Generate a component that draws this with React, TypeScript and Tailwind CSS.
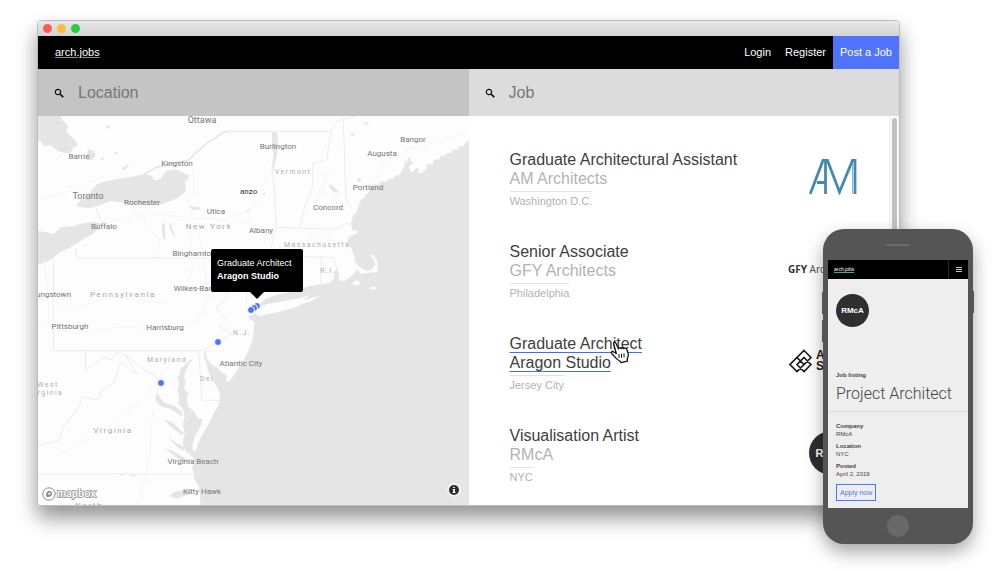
import React from "react";

type Job = { title: string; company: string; place: string; logo: React.ReactNode; active?: boolean };
type Label = { text: string; x: number; y: number };

const cities: Label[] = [
  { text: "Burlington", x: 240, y: 31 },
  { text: "Bangor", x: 375, y: 24 },
  { text: "Augusta", x: 344, y: 38 },
  { text: "Barrie", x: 41, y: 41 },
  { text: "Kingston", x: 139, y: 48 },
  { text: "Portland", x: 330, y: 72 },
  { text: "Concord", x: 290, y: 92 },
  { text: "Rochester", x: 104, y: 87 },
  { text: "Utica", x: 178, y: 96 },
  { text: "Buffalo", x: 66, y: 111 },
  { text: "Albany", x: 223, y: 115 },
  { text: "Binghamton", x: 156, y: 138 },
  { text: "Wilkes-Barre", x: 158, y: 173 },
  { text: "Youngstown", x: 11, y: 179 },
  { text: "Pittsburgh", x: 32, y: 211 },
  { text: "Harrisburg", x: 127, y: 212 },
  { text: "Atlantic City", x: 203, y: 248 },
  { text: "Virginia Beach", x: 155, y: 346 },
  { text: "Kitty Hawk", x: 164, y: 376 },
];

const majorCities: Label[] = [
  { text: "Ottawa", x: 164, y: 4 },
  { text: "Toronto", x: 50, y: 80 },
];

const smallStates: Label[] = [
  { text: "Vermont", x: 255, y: 56 },
  { text: "Massachusetts", x: 279, y: 129 },
  { text: "R.I.", x: 290, y: 155 },
  { text: "N.J.", x: 204, y: 217 },
  { text: "Maryland", x: 129, y: 244 },
  { text: "Del", x: 169, y: 263 },
  { text: "West", x: 10, y: 269 },
  { text: "Virginia", x: 8, y: 277 },
];

const states: Label[] = [
  { text: "New York", x: 171, y: 111 },
  { text: "Pennsylvania", x: 85, y: 179 },
  { text: "Virginia", x: 75, y: 315 },
  { text: "North", x: 51, y: 390 },
];

const pins = [
  { name: "New York", x: 219, y: 190 },
  { name: "Brooklyn", x: 216, y: 192 },
  { name: "Jersey City", x: 213, y: 194 },
  { name: "Philadelphia", x: 180, y: 226 },
  { name: "Washington D.C.", x: 123, y: 267 },
];

function Labels({ items, look }: { items: Label[]; look: string }) {
  return (
    <>
      {items.map((l) => (
        <span
          key={l.text}
          className={"absolute -translate-x-1/2 -translate-y-1/2 whitespace-nowrap " + look}
          style={{ left: l.x, top: l.y }}
        >
          {l.text}
        </span>
      ))}
    </>
  );
}

function Land() {
  return (
    <svg viewBox="6 18 1293 1170" className="absolute top-0 left-0 h-[390px] w-[431px]" aria-hidden="true">
      <rect x="0" y="0" width="1310" height="1200" fill="#fdfdfd" />
      <g fill="#e5e5e5">
        <path d="M1310 84 L1297 92 1288 98 1280 110 1272 108 1262 120 1250 118 1246 128 1232 130 1226 138 1216 136 1208 148 1194 150 1188 166 1176 160 1170 178 1158 190 1146 188 1150 172 1138 178 1126 188 1118 170 1132 160 1122 150 1126 136 1116 146 1112 160 1108 150 1104 170 1096 188 1086 196 1076 198 1070 208 1058 206 1050 216 1036 214 1028 224 1014 222 1006 234 998 246 990 254 984 264 974 270 970 284 964 296 960 308 952 316 948 328 945 342 950 362 962 362 966 368 950 376 938 382 934 396 930 408 944 412 950 426 956 440 956 454 966 466 978 476 994 482 1010 476 1018 464 1012 446 1000 436 1012 436 1022 450 1026 466 1024 486 1000 488 976 492 962 478 952 494 940 502 926 514 910 510 908 488 902 478 896 484 894 504 886 516 860 522 820 528 790 538 752 548 718 556 690 566 672 580 664 600 654 612 636 618 640 628 652 632 656 640 652 670 648 696 640 716 628 740 612 768 598 790 586 806 576 816 568 812 574 798 560 788 544 774 528 764 514 748 508 732 514 718 504 726 504 742 512 762 516 784 528 806 538 824 548 840 552 862 548 884 534 908 524 930 514 948 500 972 488 996 478 1024 470 1022 470 1000 480 972 494 948 500 928 484 924 474 904 458 892 452 870 456 850 444 834 450 814 444 800 450 780 460 760 474 746 462 750 448 764 434 776 432 790 422 806 430 816 424 838 430 864 426 880 440 894 446 920 440 942 446 970 440 1000 448 1022 462 1034 472 1044 474 1058 468 1072 474 1090 474 1106 482 1118 490 1134 492 1160 494 1200 1310 1200Z" />
        <path d="M0 18H74L82 34 96 48 90 64 106 80 120 94 126 106 112 112 104 128 88 130 66 124 42 104 24 108 12 92 0 98Z" />
        <path d="M120 286 134 270 158 252 184 222 210 214 250 206 290 200 326 192 348 198 354 210 372 208 392 182 418 178 444 190 450 204 446 220 450 240 444 250 428 262 402 274 370 286 322 284 276 282 226 272 190 286 160 295 130 290Z" />
        <path d="M0 362 28 366 54 372 74 352 112 348 142 340 176 336 196 342 178 366 142 388 106 410 70 428 42 450 14 462 0 466Z" />
        <path d="M156 118 174 124 178 138 168 150 152 150Z M456 288 490 292 494 298 470 300Z M378 340 386 340 388 392 380 382Z M402 334 408 354 420 382 412 376 400 352Z M708 66 724 66 726 110 720 150 712 180 706 176 714 142 708 112Z M878 220 892 230 908 244 900 250 884 238Z M960 206 976 206 972 220Z M444 190 458 196 454 212 446 206Z M630 300 642 294 636 310Z M942 72 958 68 950 80Z M208 50 226 44 216 56Z M256 176 280 160 268 180Z M192 148 204 140 200 152Z M236 124 250 132 236 134Z M980 34 1000 40 990 46Z M682 250 688 246 684 264Z M250 1090 264 1094 254 1098Z M282 1092 302 1098 290 1100Z M400 1158 420 1144 454 1140 470 1150 444 1158 420 1166Z" />
        <path d="M358 858 362 878 378 890 404 896 440 920 436 902 412 886 384 878 366 852Z M384 926 410 938 444 970 438 976 404 950Z M396 980 420 998 446 1012 440 1022 412 1000Z M384 1014 410 1022 450 1046 466 1056 430 1050 400 1026Z" />
      </g>
      <g fill="#fdfdfd">
        <path d="M656 606 672 592 694 582 730 576 760 570 790 564 820 556 800 572 834 562 850 558 828 572 804 580 782 590 750 600 718 608 690 614 668 618Z" />
        <path d="M946 522 964 510 976 520 962 526Z M1002 532 1022 530 1020 538 1004 538Z M1128 162 1140 162 1136 182 1126 180Z M1156 148 1166 160 1156 168Z" />
      </g>
      <g fill="none" stroke="#ececec" strokeWidth="3">
        <path d="M326 192 362 172 410 160 456 152 482 126 520 94 566 66 582 64" stroke="#e6e6e6" strokeWidth="5" />
        <path d="M582 64 886 64 900 36 924 26 960 18" />
        <path d="M720 64 708 180 716 240 720 350 704 420 M720 352 900 358 930 340 944 344 M886 64 876 118 874 148 830 160 830 230 806 290 792 350 M922 30 930 270 950 300 M700 440 894 442 M856 442 854 520 M892 442 906 486" />
        <path d="M120 414V444H510 L560 480 556 520 576 560 540 590 570 630 550 650 588 672 500 720 488 722H52 M52 450V722 M148 722V782L180 758 200 742 226 750 240 726 270 736 302 792 256 756 232 820 196 840 186 870 138 860 130 890 84 948 70 990 0 1010" />
        <path d="M270 736 300 760 318 776 356 796 372 820 360 852 M488 722 498 870 550 872 M0 1092H474 M180 290 190 320 200 340" />
      </g>
      <g fill="none" stroke="#f5f5f5" strokeWidth="3">
        <path d="M0 270 60 256 110 240 200 200 M200 342 260 326 320 310 440 320 560 330 690 348 M320 310 330 350 372 390 360 444 M450 290 476 240 470 170 M480 330 500 440 520 560 480 640 380 660 260 650 120 670 0 640 M24 444 34 540 40 640 M560 330 660 290 690 200 M350 900 344 1000 330 1100 300 1190 M60 1040 200 960 330 860 400 760 M0 560 100 600 220 560 400 580" />
        <path d="M800 300 850 260 880 180 M1000 240 1040 170 1110 120 1290 70 M720 420 850 380 930 400 M620 420 640 500 630 580 M460 330 470 470 450 540" />
      </g>
    </svg>
  );
}

function CityMap() {
  return (
    <section aria-label="Map" className="relative overflow-hidden bg-[#e5e5e5] font-[Roboto,sans-serif]">
      <Land />
      <Labels items={cities} look="text-[8px] leading-[10px] text-[#757575]" />
      <Labels items={majorCities} look="text-[9px] leading-[10px] text-[#757575]" />
      <Labels items={smallStates} look="text-[7px] leading-[10px] tracking-[0.2em] text-[#b0b0b0]" />
      <Labels items={states} look="text-[8px] leading-[10px] tracking-[0.2em] text-[#a8a8a8]" />
      <span className="absolute top-[71px] left-[202px] text-[8px] leading-[10px] font-medium text-[#5a5a5a]">anzo</span>
      {pins.map((p) => (
        <button
          key={p.name}
          type="button"
          aria-label={p.name}
          className="absolute size-2 -translate-x-1/2 -translate-y-1/2 rounded-full border border-white bg-[#4a73ff]"
          style={{ left: p.x, top: p.y }}
        />
      ))}
      <div className="absolute top-[133px] left-[173px] w-[92px] rounded-[2px] bg-black px-[6px] pt-2 pb-[9px] font-['Liberation_Sans',sans-serif] text-[9px] leading-[13px] whitespace-nowrap text-white">
        <p>Graduate Architect</p>
        <p className="font-bold">Aragon Studio</p>
        <svg viewBox="0 0 14 7" className="absolute top-full left-[39px] h-[7px] w-[14px]" aria-hidden="true">
          <path d="M0 0h14L7 7z" fill="#000" />
        </svg>
      </div>
      <a href="#mapbox" aria-label="mapbox" className="absolute bottom-1 left-1 flex items-center">
        <svg viewBox="0 0 14 14" className="size-[14px]" aria-hidden="true">
          <circle cx="7" cy="7" r="6.2" fill="#fff" stroke="#8a8a8a" strokeWidth="1" />
          <path d="M4.3 9.8c-.6-3.600 .6-5.900 3-5.900a2.700 2.700 0 0 1 2.700 2.800c0 2.500-2.700 3.600-5.700 3.100z" fill="#8a8a8a" />
          <path d="M7.300 5l.6 1.200 1.200.5-1.200.6-.6 1.200-.6-1.200-1.200-.6 1.200-.5z" fill="#fff" />
        </svg>
        <svg viewBox="0 0 46 13" className="h-[13px] w-[46px]" aria-hidden="true">
          <text x="1" y="9" fontFamily="Lato, sans-serif" fontSize="11" fontWeight="700" fill="#fff" stroke="#8a8a8a" strokeWidth="1.400" paintOrder="stroke">
            mapbox
          </text>
        </svg>
      </a>
      <button type="button" aria-label="Map information" className="absolute right-2 bottom-2 flex size-[14px] items-center justify-center rounded-full bg-[#f3f3f3]">
        <svg viewBox="0 0 10 10" className="size-[10px]" aria-hidden="true">
          <circle cx="5" cy="5" r="5" fill="#2b2b2b" />
          <path d="M4.200 1.800h1.600v1.300H4.200zM3.700 4h2.200v2.900h.6V8h-3V6.900h.6V5h-.4z" fill="#fff" />
        </svg>
      </button>
    </section>
  );
}

function SearchField({ id, label, tone }: { id: string; label: string; tone: string }) {
  return (
    <div className={"flex h-[47px] min-w-0 items-center gap-[14px] pl-4 " + tone}>
      <label htmlFor={id} aria-label={label}>
        <svg viewBox="0 0 10 10" className="size-[10px]" aria-hidden="true" fill="none" stroke="#111">
          <circle cx="4" cy="4" r="2.700" strokeWidth="1.200" />
          <path d="M6 6 9.200 9.200" strokeWidth="1.700" />
        </svg>
      </label>
      <input
        id={id}
        type="text"
        placeholder={label}
        className="w-full min-w-0 bg-transparent text-[16px] leading-5 text-[#444] outline-none placeholder:text-[#777]"
      />
    </div>
  );
}

const jobs: Job[] = [
  {
    title: "Graduate Architectural Assistant",
    company: "AM Architects",
    place: "Washington D.C.",
    logo: (
      <svg viewBox="0 0 48 36" className="h-9 w-12" role="img" aria-label="AM" fill="none" stroke="#438ab3" strokeWidth="2.800">
        <path d="M1.200 35 14 1.500H18.500L30.500 33 43.500 1.500H46V35M16.500 1.500V35M8 23.500H16.500" />
        <path d="M43.500 1.500V35" strokeWidth="1" strokeOpacity=".6" />
      </svg>
    ),
  },
  {
    title: "Senior Associate",
    company: "GFY Architects",
    place: "Philadelphia",
    logo: (
      <p className="w-[90px] font-['Noto_Sans',sans-serif] text-[10px] leading-3 whitespace-nowrap text-[#555]">
        <b className="text-[#333]">GFY</b> Architects
      </p>
    ),
  },
  {
    title: "Graduate Architect",
    company: "Aragon Studio",
    place: "Jersey City",
    active: true,
    logo: (
      <div className="flex w-[88px] items-center gap-[3px]">
        <svg viewBox="0 0 24 24" className="size-6 shrink-0" aria-hidden="true" fill="none" stroke="#1c1c1c" strokeWidth="1.600">
          <path d="M15 1.500 22 8.500 15 15.500 8 8.500zM8 8.500 15 15.500 8 22.500 1 15.500zM15 8.500 22 15.500 15 22.500 8 15.500z" />
        </svg>
        <p className="font-['Liberation_Sans',sans-serif] text-[12px] leading-[11px] font-bold text-[#1c1c1c]">
          ARAGON
          <br />
          STUDIO
        </p>
      </div>
    ),
  },
  {
    title: "Visualisation Artist",
    company: "RMcA",
    place: "NYC",
    logo: (
      <div className="mr-1 flex size-[44px] items-center justify-center rounded-full bg-[#2f2f2f] text-[11px] font-bold text-white">
        RMcA
      </div>
    ),
  },
];

function JobRow({ job }: { job: Job }) {
  const mark = job.active ? "underline decoration-[#3f6bff] decoration-[1px] underline-offset-[3px] " : "";
  return (
    <li className="flex h-[58px] justify-between">
      <a href="#job" className="block min-w-0 text-[16px] leading-[19px]">
        <h2 className={mark + "text-[#404040]"}>{job.title}</h2>
        <p className={mark + (job.active ? "text-[#404040]" : "text-[#b3b3b3]")}>{job.company}</p>
        <p className="mt-[3px] inline-block border-t border-[#e2e2e2] pt-[3px] align-top text-[11px] leading-[13px] text-[#b3b3b3]">
          {job.place}
        </p>
      </a>
      <div className="flex h-[54px] w-[90px] shrink-0 items-center justify-center">{job.logo}</div>
    </li>
  );
}

function HandCursor() {
  return (
    <svg viewBox="0 0 20 23" className="absolute top-[225px] left-[141px] h-[23px] w-5" aria-hidden="true">
      <path
        d="M4.300 2.200C4 .8 6 .3 6.600 1.700L8.800 7.800C9 6.500 11 6.500 11.400 7.800 11.900 6.600 13.700 6.700 14.100 8.100 14.800 7.200 16.500 7.500 16.900 8.900L18 13C18.400 15 17.400 17.200 16.600 18.500V20.700L10.200 21.700 9.300 20.200C7.300 18.900 5 16.500 3.500 14.300 2.700 12.900 1 11.800 1.300 10.600 1.700 9.400 3.300 9.800 4.300 10.700L6.200 12.200Z"
        transform="rotate(-5 10 11)"
        fill="#fff"
        stroke="#111"
        strokeWidth="1.300"
        strokeLinejoin="round"
      />
      <path d="M9 13v4M11.500 12.700v4M14 12.400v4" stroke="#111" strokeWidth="1" />
    </svg>
  );
}

function BrowserWindow() {
  return (
    <div className="overflow-hidden rounded-[4px] border border-[#bdbdbd] bg-white shadow-[0_12px_20px_rgba(0,0,0,0.42)]">
      <div className="flex h-[15px] items-center gap-[5px] bg-linear-to-b from-[#e9e9e9] to-[#d3d3d3] pl-[5px]">
        <button type="button" aria-label="Close" className="size-[9px] rounded-full bg-[#fc5b57]" />
        <button type="button" aria-label="Minimise" className="size-[9px] rounded-full bg-[#fdbb40]" />
        <button type="button" aria-label="Zoom" className="size-[9px] rounded-full bg-[#2bca44]" />
      </div>
      <header className="flex h-[33px] items-center justify-between bg-black pl-[17px] text-[11px] text-white">
        <a href="#home" className="underline decoration-[#3fae8c] decoration-1 underline-offset-1">
          arch.jobs
        </a>
        <nav className="flex h-full items-center">
          <a href="#login" className="px-[7px]">Login</a>
          <a href="#register" className="px-[7px]">Register</a>
          <a href="#post" className="flex h-full items-center bg-[#4f74fb] px-[7px]">Post a Job</a>
        </nav>
      </header>
      <div className="grid grid-cols-2">
        <SearchField id="location" label="Location" tone="bg-[#c4c4c4]" />
        <SearchField id="job" label="Job" tone="bg-[#dcdcdc]" />
        <CityMap />
        <section aria-label="Jobs" className="relative">
          <ul className="flex flex-col gap-[34px] pt-[34px] pr-[21px] pb-[21px] pl-[41px]">
            {jobs.map((j) => (
              <JobRow key={j.title} job={j} />
            ))}
          </ul>
          <div className="absolute inset-y-0 right-0 flex w-[10px] justify-center border-l border-[#eee] bg-[#fafafa] pt-[2px]">
            <div className="h-[260px] w-[5px] rounded-full bg-[#c1c1c1]" />
          </div>
          <HandCursor />
        </section>
      </div>
    </div>
  );
}

const facts = [
  { term: "Company", value: "RMcA" },
  { term: "Location", value: "NYC" },
  { term: "Posted", value: "April 2, 2019" },
];

function Phone() {
  return (
    <div className="absolute top-[229px] right-[27px] w-[150px] rounded-[21px] bg-[#555] px-[5px] shadow-[0_8px_18px_rgba(0,0,0,0.35)]">
      <span className="absolute top-[63px] -left-px h-[22px] w-1 bg-[#555]" />
      <span className="absolute top-[91px] -left-px h-[22px] w-1 bg-[#555]" />
      <span className="absolute top-[62px] -right-px h-[22px] w-1 bg-[#555]" />
      <div className="flex h-[31px] items-center justify-center">
        <span className="h-[2px] w-6 rounded-full bg-[#6d6d6d]" />
      </div>
      <div className="bg-[#eee] text-[#444]">
        <header className="flex h-[19px] items-center justify-between bg-black text-white">
          <a href="#home" className="pl-[6px] text-[5px] underline decoration-[#3fae8c] decoration-1 underline-offset-1">
            arch.jobs
          </a>
          <button type="button" aria-label="Menu" className="flex h-full w-5 items-center justify-center border-l border-[#2a2a2a]">
            <svg viewBox="0 0 6 5" className="h-[5px] w-[6px]" aria-hidden="true">
              <path d="M0 .5h6M0 2.500h6M0 4.500h6" stroke="#ddd" strokeWidth=".9" />
            </svg>
          </button>
        </header>
        <div className="border-b border-[#ddd] px-2 pt-[15px] pb-[6px]">
          <div className="flex size-[33px] items-center justify-center rounded-full bg-[#2f2f2f] text-[8px] font-bold text-white">
            RMcA
          </div>
          <p className="mt-11 text-[6px] leading-2 font-bold">Job listing</p>
          <h1 className="mt-1 font-[Roboto,sans-serif] text-[16px] leading-[22px] font-light whitespace-nowrap">Project Architect</h1>
        </div>
        <div className="px-2 pt-[10px] pb-[7px]">
          <dl className="flex flex-col gap-1 text-[6px] leading-2">
            {facts.map((f) => (
              <div key={f.term}>
                <dt className="font-bold">{f.term}</dt>
                <dd>{f.value}</dd>
              </div>
            ))}
          </dl>
          <button type="button" className="mt-[6px] block h-[17px] border border-[#4f74fb] px-[3px] text-[7px] leading-[13px] text-[#4f74fb]">
            Apply now
          </button>
        </div>
      </div>
      <div className="flex h-9 items-center justify-center">
        <button type="button" aria-label="Home" className="size-[22px] rounded-full bg-[#686868]" />
      </div>
    </div>
  );
}

export default function App() {
  return (
    <main className="relative min-h-screen bg-white pt-5 pr-[100px] pb-16 pl-[37px] font-['Liberation_Sans',Arial,sans-serif]">
      <BrowserWindow />
      <Phone />
    </main>
  );
}
